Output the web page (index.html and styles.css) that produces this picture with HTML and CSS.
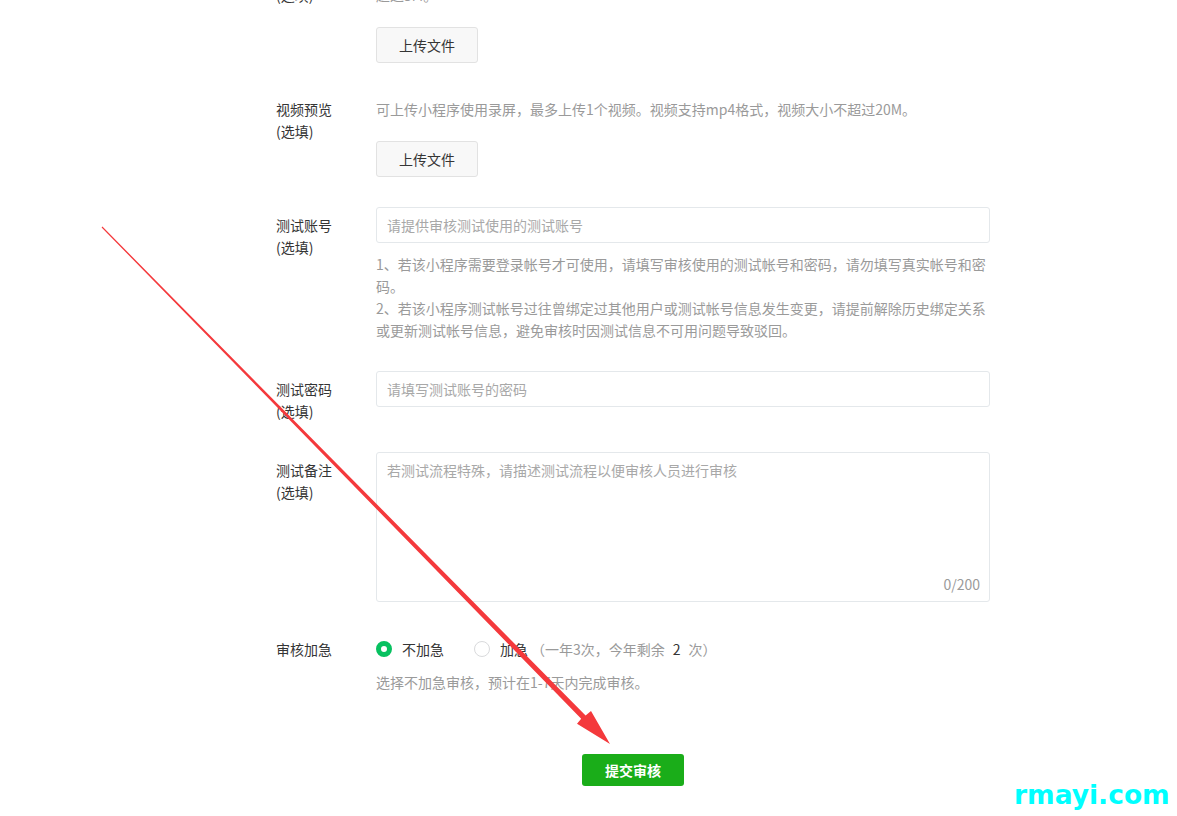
FILE: index.html
```html
<!DOCTYPE html>
<html lang="zh-CN">
<head>
<meta charset="utf-8">
<title>提交审核</title>
<link rel="stylesheet" href="styles.css">
</head>
<body>
<div class="page">
  <form class="form">
    <div class="row row-first">
      <div class="label">图片预览<br>(选填)</div>
      <div class="control">
        <p class="hint">可上传小程序截图，最多上传10张图片。图片支持jpg、png格式，单张图片大小不</p>
        <p class="hint">超过5M。</p>
        <button type="button" class="upload">上传文件</button>
      </div>
    </div>

    <div class="row row-video">
      <div class="label">视频预览<br>(选填)</div>
      <div class="control">
        <p class="hint">可上传小程序使用录屏，最多上传1个视频。视频支持mp4格式，视频大小不超过20M。</p>
        <button type="button" class="upload">上传文件</button>
      </div>
    </div>

    <div class="row">
      <div class="label label-pad">测试账号<br>(选填)</div>
      <div class="control">
        <input class="field" type="text" placeholder="请提供审核测试使用的测试账号">
        <p class="hint hint-below">1、若该小程序需要登录帐号才可使用，请填写审核使用的测试帐号和密码，请勿填写真实帐号和密码。<br>2、若该小程序测试帐号过往曾绑定过其他用户或测试帐号信息发生变更，请提前解除历史绑定关系或更新测试帐号信息，避免审核时因测试信息不可用问题导致驳回。</p>
      </div>
    </div>

    <div class="row">
      <div class="label label-pad">测试密码<br>(选填)</div>
      <div class="control">
        <input class="field" type="text" placeholder="请填写测试账号的密码">
      </div>
    </div>

    <div class="row">
      <div class="label label-pad">测试备注<br>(选填)</div>
      <div class="control">
        <div class="textarea">
          <span class="placeholder">若测试流程特殊，请描述测试流程以便审核人员进行审核</span>
          <span class="counter">0/200</span>
        </div>
      </div>
    </div>

    <div class="row row-urgent">
      <div class="label label-pad6">审核加急</div>
      <div class="control">
        <div class="radios">
          <label class="radio"><span class="dot dot-on"></span>不加急</label>
          <label class="radio"><span class="dot"></span>加急<span class="tip">（一年3次，今年剩余<b class="num">2</b>次）</span></label>
        </div>
        <p class="hint hint-urgent">选择不加急审核，预计在1-7天内完成审核。</p>
      </div>
    </div>

    <div class="actions">
      <button type="button" class="submit">提交审核</button>
    </div>
  </form>

  <svg class="arrow" width="1177" height="816" viewBox="0 0 1177 816" xmlns="http://www.w3.org/2000/svg">
    <polygon fill="#f4393c" points="102.4,226.6 585.6,715.4 591,711 610,744 577,723.8 581.2,718.8 101.6,227.4"/>
  </svg>

  <div class="watermark">rmayi.com</div>
</div>
</body>
</html>
```

FILE: styles.css
```css
* { box-sizing: border-box; }

html, body {
  margin: 0;
  padding: 0;
  background: #ffffff;
}

body {
  font-family: "Noto Sans CJK SC", "Microsoft YaHei", sans-serif;
  font-size: 14px;
  line-height: 22px;
  color: #353535;
}

.page {
  position: relative;
  width: 1177px;
  height: 816px;
  overflow: hidden;
  background: #ffffff;
}

.form {
  width: 714px;
  margin: -38px 0 0 276px;
}

.row {
  display: flex;
  align-items: flex-start;
  margin-bottom: 30px;
}

.row-first { margin-bottom: 35px; }
.row-video { margin-bottom: 30px; }

.label {
  width: 100px;
  flex-shrink: 0;
  color: #353535;
  line-height: 22px;
}

.label-pad { padding-top: 7px; }
.label-pad6 { padding-top: 6px; }

.control {
  width: 614px;
}

.hint {
  margin: 0;
  color: #9a9a9a;
  line-height: 22px;
}

.upload {
  display: block;
  width: 102px;
  height: 36px;
  margin-top: 21px;
  padding: 0;
  border: 1px solid #e2e2e2;
  border-radius: 3px;
  background: #f8f8f8;
  color: #353535;
  font-family: inherit;
  font-size: 14px;
}

.field {
  display: block;
  width: 614px;
  height: 36px;
  padding: 0 10px;
  border: 1px solid #e4e8eb;
  border-radius: 3px;
  background: #ffffff;
  font-family: inherit;
  font-size: 14px;
  color: #353535;
  outline: none;
}

.field::placeholder { color: #a8a8a8; }

.hint-below { margin-top: 10px; }

.textarea {
  display: flex;
  flex-direction: column;
  justify-content: space-between;
  width: 614px;
  height: 150px;
  padding: 6px 9px 6px 10px;
  border: 1px solid #e4e8eb;
  border-radius: 3px;
}

.placeholder { color: #a8a8a8; }

.counter {
  align-self: flex-end;
  color: #9a9a9a;
}

.row-urgent { margin-bottom: 61px; }

.radios {
  display: flex;
  align-items: center;
  gap: 30px;
  padding-top: 6px;
}

.radio {
  display: flex;
  align-items: center;
  color: #353535;
}

.dot {
  display: inline-block;
  width: 16px;
  height: 16px;
  margin-right: 10px;
  border: 1px solid #d9dadc;
  border-radius: 50%;
  background: #ffffff;
}

.dot-on {
  border: 5px solid #07c160;
}

.tip {
  color: #9a9a9a;
  margin-left: 3px;
}

.num {
  font-weight: normal;
  color: #353535;
  margin: 0 8px;
}

.hint-urgent { margin-top: 11px; }

.actions {
  display: flex;
  justify-content: center;
}

.submit {
  width: 102px;
  height: 32px;
  padding: 0;
  border: 0;
  border-radius: 3px;
  background: #1aad19;
  color: #ffffff;
  font-family: inherit;
  font-size: 14px;
  font-weight: bold;
}

.arrow {
  position: absolute;
  left: 0;
  top: 0;
  pointer-events: none;
}

.watermark {
  position: absolute;
  left: 1014px;
  top: 780px;
  font-family: "DejaVu Sans", sans-serif;
  font-weight: bold;
  font-size: 26.5px;
  line-height: 30px;
  color: #00ffff;
}
```
